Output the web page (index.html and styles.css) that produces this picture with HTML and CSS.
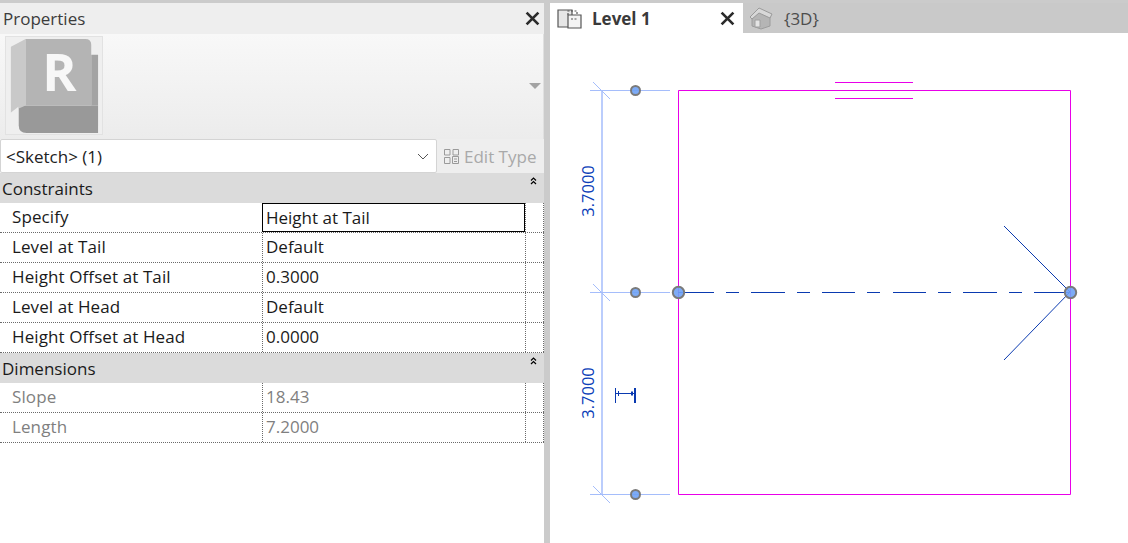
FILE: index.html
```html
<!DOCTYPE html>
<html lang="en">
<head>
<meta charset="utf-8">
<title>Properties</title>
<link rel="stylesheet" href="styles.css">
</head>
<body>
<div class="app">
  <section class="panel">
    <header class="panel-head">
      <span>Properties</span>
      <svg class="close" viewBox="0 0 14 14"><path d="M1.500 1.500 12.500 12.500M12.500 1.500 1.500 12.500"/></svg>
    </header>
    <div class="type-area">
      <div class="logo-box">
        <svg class="logo" viewBox="0 0 98 99">
          <path class="l-strip" d="M20 70H94V18H87V70Z"/>
          <path class="l-bottom" d="M13 70H94V98H21Q13 98 13 90Z"/>
          <path class="l-fold" d="M5 10 20 2V70L13 73V71L5 77Z"/>
          <path class="l-main" d="M20 2H81Q87 2 87 8V70H20Z"/>
          <text class="l-r" x="37" y="55">R</text>
        </svg>
      </div>
      <svg class="type-arrow" viewBox="0 0 12 6"><path d="M0 0H12L6 6Z"/></svg>
    </div>
    <div class="selector">
      <div class="select">
        <span>&lt;Sketch&gt; (1)</span>
        <svg class="chev" viewBox="0 0 12 7"><path d="M1 1 6 6 11 1"/></svg>
      </div>
      <div class="edit-type">
        <svg class="edit-icon" viewBox="0 0 17 17">
          <path d="M1.500 1.500H7V7H1.500ZM10 1.500H15.500V7H10ZM1.500 9.500H7V15.500H1.500ZM9.500 8.500H15.500V15.500H9.500Z"/>
          <path d="M11 11H14M11 13.500H14"/>
        </svg>
        <span>Edit Type</span>
      </div>
    </div>
    <div class="group"><span>Constraints</span><svg class="collapse" viewBox="0 0 7 8"><path d="M1 3.500 3.500 1 6 3.500M1 7 3.500 4.500 6 7"/></svg></div>
    <div class="row"><div class="name">Specify</div><div class="value active">Height at Tail</div><div class="extra"></div></div>
    <div class="row"><div class="name">Level at Tail</div><div class="value">Default</div><div class="extra"></div></div>
    <div class="row"><div class="name">Height Offset at Tail</div><div class="value">0.3000</div><div class="extra"></div></div>
    <div class="row"><div class="name">Level at Head</div><div class="value">Default</div><div class="extra"></div></div>
    <div class="row"><div class="name">Height Offset at Head</div><div class="value">0.0000</div><div class="extra"></div></div>
    <div class="group"><span>Dimensions</span><svg class="collapse" viewBox="0 0 7 8"><path d="M1 3.500 3.500 1 6 3.500M1 7 3.500 4.500 6 7"/></svg></div>
    <div class="row muted"><div class="name">Slope</div><div class="value">18.43</div><div class="extra"></div></div>
    <div class="row muted"><div class="name">Length</div><div class="value">7.2000</div><div class="extra"></div></div>
  </section>

  <section class="view">
    <nav class="tabs">
      <div class="tab current">
        <svg class="tab-icon" viewBox="0 0 25 21">
          <path class="ti-back" d="M1 2H15V19H1Z"/>
          <path class="ti-front" d="M11 7H24V20H11Z"/>
          <path class="ti-dash" d="M11 7V3H20V7M14 11H21"/>
        </svg>
        <span>Level 1</span>
        <svg class="close" viewBox="0 0 14 14"><path d="M1.500 1.500 12.500 12.500M12.500 1.500 1.500 12.500"/></svg>
      </div>
      <div class="tab other">
        <svg class="tab-icon house" viewBox="0 0 24 23">
          <path class="h-wall" d="M3 10 12 4 21 9V19L12 22 3 19Z"/>
          <path class="h-roof" d="M1 10 10 1 23 7 21 11 10 6 3 12Z"/>
          <path class="h-door" d="M6 13H11V20H6Z"/>
        </svg>
        <span>{3D}</span>
      </div>
    </nav>
    <svg class="canvas" viewBox="550 33 578 510">
      <g class="sketch">
        <path d="M678.500 90.500H1070.500V494.500H678.500Z"/>
        <path d="M835 82.500H913M835 98.500H913"/>
      </g>
      <g class="dim">
        <path d="M602 90V494"/>
        <path d="M590 90.500H670M590 292.500H670M590 494.500H670"/>
        <path class="tick" d="M593 82 610 99M593 284 610 301M593 486 610 503"/>
      </g>
      <text class="dim-text" transform="translate(594 191) rotate(-90)">3.7000</text>
      <text class="dim-text" transform="translate(594 393) rotate(-90)">3.7000</text>
      <g class="ref">
        <path class="dashed" d="M678 292.500H1070"/>
        <path d="M1004 226 1070 292 1004 360"/>
        <path d="M615.500 388V403M615 393.500H634M618.500 391V396"/>
        <path class="flip" d="M635 388V403M632 391.500V395.500"/>
      </g>
      <g class="grips">
        <circle cx="635.500" cy="90.500" r="4.500"/>
        <circle cx="635.500" cy="292.500" r="4.500"/>
        <circle cx="635.500" cy="494.500" r="4.500"/>
        <circle cx="678.500" cy="292.500" r="5.700"/>
        <circle cx="1070.500" cy="292.500" r="5.700"/>
      </g>
    </svg>
  </section>
</div>
</body>
</html>
```
FILE: styles.css
```css
* { box-sizing: border-box; }
html, body { margin: 0; height: 100%; overflow: hidden; }
body { background: #fff; font-family: "Open Sans", "Noto Sans", sans-serif; font-size: 17px; color: #1a1a1a; }

.app { display: flex; width: 1128px; height: 543px; padding-top: 3px; background: #cbcbcb; }

.panel { width: 544px; flex: none; background: #fff; display: flex; flex-direction: column; }
.panel-head { height: 31px; flex: none; background: #eeeeee; display: flex; align-items: center; justify-content: space-between; padding: 0 4px 0 3px; color: #3c3c3c; }
.close { width: 15px; height: 15px; fill: none; stroke: #2b2b2b; stroke-width: 2.500; flex: none; }

.type-area { height: 105px; flex: none; background: linear-gradient(#f8f8f8, #ececec); display: flex; align-items: center; justify-content: space-between; padding: 0 2px 2px 5px; border-right: 1px solid #e0e0e0; }
.logo-box { width: 98px; height: 99px; background: #efefef; border: 1px solid #e2e2e2; }
.logo { display: block; width: 96px; height: 97px; }
.l-strip { fill: #a3a3a3; }
.l-bottom { fill: #999999; }
.l-fold { fill: #c9c9c9; }
.l-main { fill: #b4b4b4; }
.l-r { font-family: "Open Sans", sans-serif; font-weight: 700; font-size: 53px; fill: #f7f7f7; }
.type-arrow { width: 12px; height: 6px; fill: #a3a3a3; flex: none; }

.selector { height: 34px; flex: none; background: #eeeeee; display: flex; align-items: stretch; }
.select { width: 437px; background: #fff; border: 1px solid #d4d4d4; border-radius: 2px; display: flex; align-items: center; justify-content: space-between; padding: 0 7px 0 5px; color: #222; }
.chev { width: 12px; height: 7px; fill: none; stroke: #555; stroke-width: 1; }
.edit-type { display: flex; align-items: center; gap: 4px; padding-left: 6px; color: #a9a9a9; }
.edit-icon { width: 17px; height: 17px; fill: none; stroke: #9a9a9a; stroke-width: 1; }

.group { height: 30px; flex: none; background: #dbdbdb; display: flex; align-items: center; justify-content: space-between; padding: 0 7px 0 2px; }
.group .collapse { width: 7px; height: 8px; margin-bottom: 14px; fill: none; stroke: #000; stroke-width: 1.200; }

.row { height: 30px; flex: none; display: grid; grid-template-columns: 262px 263px 19px; border-bottom: 1px dotted #6a6a6a; }
.name { padding: 0 0 0 12px; line-height: 28px; white-space: nowrap; letter-spacing: 0.1px; }
.value { padding: 0 0 0 3px; line-height: 28px; border-left: 1px dotted #6a6a6a; white-space: nowrap; }
.extra { border-left: 1px dotted #6a6a6a; border-right: 1px dotted #6a6a6a; }
.value.active { border: 1px solid #000; height: 29px; line-height: 27px; }
.muted .name, .muted .value { color: #7f7f7f; }

.view { width: 578px; flex: none; margin-left: 6px; background: #fff; display: flex; flex-direction: column; }
.tabs { height: 30px; flex: none; display: flex; background: #c9c9c9; }
.tab { display: flex; align-items: center; }
.tab.current { width: 193px; background: #fff; padding: 0 8px 0 7px; font-weight: 700; color: #3a3a3a; }
.tab.current span { margin-left: 10px; flex: 1; }
.tab.other { padding-left: 6px; color: #4d4d4d; }
.tab.other span { margin-left: 11px; }
.tab-icon { width: 25px; height: 21px; flex: none; }
.ti-back { fill: #e6e6e6; stroke: #555; stroke-width: 1.200; }
.ti-front { fill: #f4f4f4; stroke: #555; stroke-width: 1.200; }
.ti-dash { fill: none; stroke: #555; stroke-width: 1.200; stroke-dasharray: 2 1.500; }
.house { width: 24px; height: 23px; }
.h-wall { fill: #b5b5b5; stroke: #9c9c9c; }
.h-roof { fill: #d8d8d8; stroke: #9a9a9a; }
.h-door { fill: #e4e4e4; stroke: #a0a0a0; }

.canvas { display: block; width: 578px; height: 510px; }
.sketch path { fill: none; stroke: #e800e8; stroke-width: 1; }
.dim path { fill: none; stroke: #a5bdfb; stroke-width: 1; }
.dim path:first-child { stroke-width: 1.500; }
.dim-text { font-family: "Open Sans", sans-serif; font-size: 16.500px; fill: #0c40b8; text-anchor: middle; }
.ref path { fill: none; stroke: #0a3ab0; stroke-width: 1; }
.ref .dashed { stroke-dasharray: 36 12 13 12 34 12 13 12 33 12 13 13 33 12 13 12 34 12 13 12 36; }
.ref .flip { stroke-width: 2; }
.grips circle { fill: #6fa2f5; stroke: #7a7a7a; stroke-width: 2; fill-opacity: 0.9; }
```
